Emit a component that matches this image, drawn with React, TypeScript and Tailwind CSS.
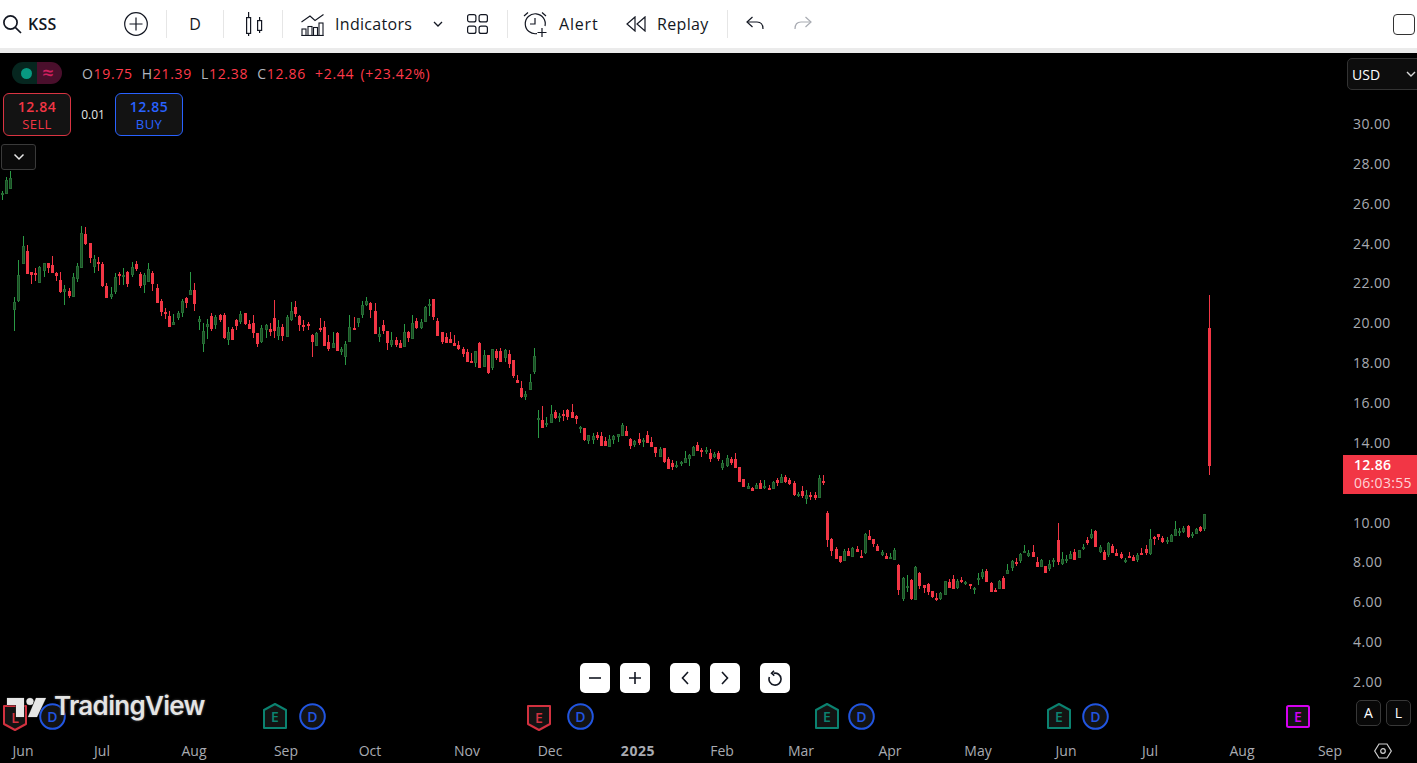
import React from "react";

type C = [number, "g" | "r", number, number, number, number];
const raw: { ox: number; oy: number; d: [number, string, number, number, number, number][] }[] = [
  { ox: 0, oy: 165, d: [
    [7,"g",78,83,88,105],[19,"g",37,45,87,87],[31,"g",18,40,72,72],[43,"g",396,411,435,497],[55,"g",285,330,408,410],[70,"g",213,243,297,297],[82,"r",240,258,327,327],[94,"r",321,321,330,357],[106,"r",309,324,327,348],[118,"g",304,306,354,354],[133,"g",294,294,318,336],[145,"r",294,294,309,324],[157,"r",273,300,324,324],[169,"r",321,324,333,348],[181,"r",321,345,381,384],[193,"g",360,372,381,420],[208,"r",369,378,393,399],[220,"g",324,336,396,396],[232,"g",294,303,342,351],[244,"g",183,204,309,309],[256,"r",186,207,237,240],[271,"r",234,234,279,294],[283,"g",270,282,306,324],[295,"r",276,291,297,318],[307,"r",291,297,363,366],[319,"r",354,363,399,399],[334,"g",366,387,396,402],[346,"g",324,336,381,387],[358,"r",321,327,333,360],[370,"g",309,330,336,360],[382,"r",318,321,357,366],[397,"g",291,306,330,336],[409,"r",288,297,312,318],[421,"r",321,327,363,369],[433,"g",324,330,360,384],[445,"g",294,312,351,351],[457,"r",318,324,357,378],[472,"r",357,369,414,414],[484,"r",402,408,441,453],[496,"r",429,441,444,462],[508,"r",438,453,486,486],[520,"g",447,471,480,480],[535,"g",438,444,459,465],[547,"g",402,408,444,456],[559,"r",396,399,414,429],[571,"g",321,375,390,390],[583,"r",354,375,417,438],[598,"g",453,462,471,495],[610,"g",474,498,537,561],[622,"g",462,477,486,522],[634,"r",444,453,492,498],[646,"g",450,456,480,492],[661,"r",447,450,465,471],[673,"r",444,450,519,522],[685,"g",486,501,525,540],[697,"r",486,492,525,525],[709,"r",462,465,483,495],[721,"g",438,447,471,477],[736,"r",444,444,477,480],[748,"r",465,477,492,492],[760,"r",450,474,504,519],[772,"r",504,504,537,546],[784,"g",480,489,531,534],[799,"g",477,480,495,519],[811,"r",474,492,501,513],[823,"r",405,459,498,519],[835,"g",465,486,513,525],
  ]},
  { ox: 280, oy: 280, d: [
    [7,"r",132,141,168,183],[22,"g",105,111,171,171],[34,"g",66,93,120,123],[46,"r",63,81,102,111],[58,"r",105,108,135,153],[70,"r",120,135,138,153],[85,"r",126,132,138,150],[97,"r",162,165,186,231],[109,"g",156,159,198,198],[121,"r",114,144,147,156],[133,"r",123,141,198,198],[145,"r",165,186,207,213],[160,"g",156,189,204,204],[172,"r",156,159,213,213],[184,"g",201,207,216,225],[196,"g",183,192,231,255],[208,"g",105,141,186,186],[223,"r",111,144,147,150],[235,"g",114,114,129,141],[247,"g",63,75,105,114],[259,"g",51,63,75,78],[271,"r",66,69,90,114],[286,"r",69,93,162,162],[298,"g",141,162,171,186],[310,"r",120,135,153,162],[322,"r",153,153,189,210],[334,"g",156,180,195,201],[349,"r",171,180,195,201],[361,"r",180,189,204,204],[373,"g",132,156,201,201],[385,"r",153,156,174,186],[397,"g",105,129,177,177],[409,"r",114,123,144,147],[424,"g",117,126,144,147],[436,"g",78,81,126,126],[448,"g",57,72,78,108],[460,"r",57,57,111,120],[472,"r",114,123,168,168],[487,"r",156,156,186,192],[499,"r",159,171,189,189],[511,"r",156,177,189,189],[523,"r",165,189,198,198],[535,"r",183,195,207,210],[550,"r",201,207,222,231],[562,"r",207,216,246,246],[574,"r",219,243,249,249],[586,"g",213,213,249,261],[598,"r",186,189,264,264],[613,"g",210,225,261,261],[625,"r",225,225,279,282],[637,"g",207,207,264,270],[649,"r",207,213,234,240],[661,"r",204,213,246,246],[676,"g",207,210,234,246],[688,"r",210,222,252,264],[700,"r",240,240,288,294],[712,"r",285,300,309,309],[724,"r",303,324,351,354],[736,"g",333,342,351,360],[751,"g",282,306,330,330],[763,"g",204,228,276,282],
  ]},
  { ox: 530, oy: 390, d: [
    [25,"g",60,84,90,144],[37,"r",48,90,114,114],[49,"g",81,99,105,111],[64,"g",45,72,99,99],[76,"r",60,66,84,87],[88,"g",69,78,81,96],[100,"r",60,72,75,93],[112,"r",57,60,81,90],[127,"r",42,66,84,84],[139,"r",75,78,87,102],[151,"g",108,111,114,129],[163,"r",114,114,150,153],[175,"g",135,135,153,162],[190,"g",129,138,150,162],[202,"r",126,135,144,150],[214,"r",126,138,168,168],[226,"r",141,153,168,168],[238,"g",135,147,171,171],[250,"g",135,138,150,162],[265,"g",132,132,141,156],[277,"g",99,105,138,138],[289,"r",108,123,138,138],[301,"r",144,147,168,177],[313,"g",150,153,165,171],[328,"r",129,147,159,165],[340,"g",144,150,156,171],[352,"r",123,135,159,159],[364,"r",141,156,171,171],[376,"r",171,171,189,201],[391,"g",171,177,201,201],[403,"r",174,174,216,219],[415,"r",201,207,237,237],[427,"r",210,219,231,240],[439,"g",213,225,228,234],[454,"g",213,216,222,228],[466,"g",183,204,219,219],[478,"g",192,195,207,228],[490,"g",168,171,198,198],[502,"r",156,165,183,183],[514,"r",174,180,183,201],[529,"g",171,180,183,192],[541,"r",177,189,207,216],[553,"g",186,192,201,204],[565,"r",183,189,207,213],[577,"g",210,219,234,240],[592,"g",195,204,228,231],[604,"r",201,207,219,225],[616,"r",189,207,234,234],[628,"r",231,231,276,276],[640,"r",267,267,291,291],[655,"g",279,288,297,297],[667,"r",291,294,303,303],[679,"g",279,285,297,297],[691,"r",270,279,297,297],[703,"g",270,288,294,297],[718,"r",285,294,297,300],[730,"g",273,276,297,297],[742,"r",264,270,279,288],[754,"g",252,261,279,279],[766,"r",255,261,276,279],[778,"r",264,270,282,285],[793,"r",273,279,315,318],[805,"g",306,312,315,321],[817,"r",288,303,318,324],[829,"g",300,315,327,342],[841,"r",306,315,318,330],[856,"r",306,315,324,330],[868,"g",255,264,324,324],[880,"r",255,273,276,285],
  ]},
  { ox: 810, oy: 500, d: [
    [52,"r",33,39,120,141],[64,"r",114,117,153,168],[79,"r",141,147,177,177],[91,"r",168,168,186,189],[103,"g",147,153,183,183],[115,"r",144,153,168,168],[127,"g",141,144,171,171],[142,"r",138,147,156,156],[154,"r",150,168,171,174],[166,"g",99,102,159,162],[178,"r",90,108,120,120],[190,"r",117,117,132,141],[202,"r",132,138,153,153],[217,"g",150,156,165,168],[229,"r",159,168,177,177],[241,"g",159,171,177,177],[253,"g",144,150,180,180],[265,"r",192,195,270,285],[280,"g",231,234,297,303],[292,"g",225,258,264,276],[304,"r",237,240,297,300],[316,"g",198,201,300,300],[328,"r",216,219,258,267],[343,"r",255,255,264,279],[355,"r",249,252,276,285],[367,"r",273,273,291,294],[379,"r",279,294,300,303],[391,"g",276,279,297,300],[406,"g",243,243,285,285],[418,"r",237,246,264,264],[430,"r",225,237,267,267],[442,"g",237,243,264,267],[454,"r",231,240,243,249],[466,"g",243,246,249,255],[481,"r",252,252,258,267],[493,"g",261,264,270,282],[505,"g",219,234,240,255],[517,"g",207,216,231,237],[529,"r",207,213,246,246],[544,"r",246,249,276,276],[556,"r",264,270,273,276],[568,"g",240,243,267,267],[580,"r",228,234,267,267],[592,"g",192,210,222,222],[607,"g",180,183,204,213],[619,"r",174,186,189,198],
  ]},
  { ox: 1010, oy: 500, d: [
    [31,"g",159,162,183,189],[43,"g",135,153,159,159],[55,"g",150,159,168,171],[70,"r",135,156,171,171],[82,"r",171,186,201,201],[94,"g",177,180,201,201],[106,"r",198,198,219,219],[118,"g",180,192,207,213],[130,"g",174,180,183,201],[145,"r",69,120,186,195],[157,"g",156,177,192,195],[169,"g",165,177,180,189],[181,"g",153,162,177,177],[193,"r",147,156,180,180],[208,"g",150,150,174,174],[220,"g",132,141,147,150],[232,"r",111,120,129,135],[244,"g",87,102,114,117],[256,"r",90,93,141,141],[271,"g",135,141,156,159],[283,"r",150,156,180,180],[295,"g",126,129,165,171],[307,"r",132,138,159,159],[319,"r",147,159,168,168],[334,"r",156,162,174,177],[346,"g",174,180,186,189],[358,"r",156,168,174,174],[370,"r",165,171,183,183],[382,"g",159,165,180,186],[394,"r",144,159,162,162],[409,"r",135,147,159,165],[421,"g",87,117,162,165],[433,"r",108,111,117,135],[445,"r",102,102,111,120],[457,"r",108,114,126,129],[472,"g",111,120,123,132],[484,"g",102,105,126,126],[496,"g",63,87,108,108],[508,"g",84,93,99,108],[520,"g",78,84,96,99],[535,"r",75,78,111,114],[547,"g",96,102,108,114],[559,"g",84,87,102,102],[571,"r",78,81,93,96],[583,"g",42,42,87,93],
  ]},
];

const candles: C[] = raw.flatMap(({ ox, oy, d }) =>
  d.map(([x, c, a, b, e, f]) => [ox + Math.floor(x / 3), c as "g" | "r", oy + a / 3, oy + b / 3, oy + e / 3, oy + f / 3] as C)
);
candles.push([1209, "r", 295, 328, 466, 475]);

function Chart() {
  return (
    <svg className="block w-full h-full" viewBox="0 53 1343 686" shapeRendering="crispEdges">
      {candles.map(([x, c, t, bt, bb, w], i) => {
        const h = Math.max(bb - bt, 2);
        if (c === "r")
          return (
            <g key={i} fill="#f23645">
              <rect x={x} y={t} width={1} height={w - t} />
              <rect x={x - 1} y={bt} width={3} height={h} />
            </g>
          );
        return (
          <g key={i}>
            <rect x={x} y={t} width={1} height={w - t} fill="#2a9a45" />
            <rect x={x - 1} y={bt} width={3} height={h} fill="#266b33" />
            <rect x={x} y={bt + 1} width={1} height={Math.max(h - 2, 0)} fill="#1a4d25" />
          </g>
        );
      })}
    </svg>
  );
}

const Sep = ({ cls }: { cls: string }) => <div className={`w-px h-[28px] bg-[#e6e6e6] shrink-0 ${cls}`} />;

function Marker({ kind, letter, cls }: { kind: "green" | "red" | "purple" | "blue"; letter: string; cls: string }) {
  const colors = { green: "#0b8270", red: "#d2313f", purple: "#d500f0", blue: "#2155e0" };
  const col = colors[kind];
  return (
    <svg className={`shrink-0 ${cls}`} width={kind === "blue" ? 27 : 24} height={kind === "blue" ? 27 : 26} viewBox={kind === "blue" ? "0 0 27 27" : "0 0 24 26"}>
      {kind === "blue" && <circle cx="13.5" cy="13.5" r="12.3" fill="#131313" stroke={col} strokeWidth="2" />}
      {kind === "green" && <path d="M12 1 L23 7 V25 H1 V7 Z" fill="#131313" stroke={col} strokeWidth="2" strokeLinejoin="round" />}
      {kind === "red" && <path d="M1 1 H23 V19 L12 25 L1 19 Z" fill="#131313" stroke={col} strokeWidth="2" strokeLinejoin="round" />}
      {kind === "purple" && <rect x="1" y="1" width="22" height="21" rx="1.5" fill="#131313" stroke={col} strokeWidth="2" />}
      <text
        x={kind === "blue" ? 13.5 : 12}
        y={kind === "blue" ? 18.5 : kind === "purple" ? 17 : kind === "red" ? 18 : 19}
        textAnchor="middle"
        fontSize="14"
        fontWeight="600"
        fontFamily="'Open Sans', sans-serif"
        fill={col}
      >
        {letter}
      </text>
    </svg>
  );
}

const months: [string, string][] = [
  ["Jun", "ml-[3px]"], ["Jul", "ml-[39px]"], ["Aug", "ml-[52px]"], ["Sep", "ml-[52px]"], ["Oct", "ml-[44px]"], ["Nov", "ml-[57px]"], ["Dec", "ml-[43px]"],
  ["2025", "ml-[48px] font-bold tracking-[0.6px]"], ["Feb", "ml-[44px]"], ["Mar", "ml-[39px]"], ["Apr", "ml-[49px]"], ["May", "ml-[48px]"], ["Jun", "ml-[48px]"], ["Jul", "ml-[44px]"], ["Aug", "ml-[52px]"], ["Sep", "ml-[48px]"],
];
const prices = ["30.00","28.00","26.00","24.00","22.00","20.00","18.00","16.00","14.00","","10.00","8.00","6.00","4.00","2.00"];

const Zbtn = ({ cls, children }: { cls: string; children: React.ReactNode }) => (
  <div className={`w-[30px] h-[30px] bg-white rounded-[5px] flex items-center justify-center shrink-0 ${cls}`}>{children}</div>
);

export default function App() {
  const ohlc: [string, string][] = [["O", "19.75"], ["H", "21.39"], ["L", "12.38"], ["C", "12.86"]];
  return (
    <div className="w-[1417px] h-[763px] overflow-hidden flex flex-col bg-black font-['Open_Sans',sans-serif]">
      {/* toolbar */}
      <div className="h-[53px] shrink-0 bg-white border-b-[5px] border-[#ebebeb] flex items-center text-[#131722] text-[16px]">
        <svg className="ml-[2px] shrink-0" width="20" height="20" viewBox="0 0 20 20" fill="none" stroke="#131722" strokeWidth="1.7"><circle cx="8.5" cy="8.5" r="6.6" /><path d="M13.3 13.3 L19 19" /></svg>
        <span className="ml-[6px] w-[30px] font-semibold whitespace-nowrap tracking-[0.3px]">KSS</span>
        <svg className="ml-[66px] shrink-0" width="24" height="24" viewBox="0 0 24 24" fill="none" stroke="#131722" strokeWidth="1.2"><circle cx="12" cy="12" r="11.3" /><path d="M12 5.5V18.5M5.5 12H18.5" /></svg>
        <Sep cls="ml-[18px]" />
        <span className="w-[56px] text-center font-medium">D</span>
        <Sep cls="" />
        <div className="w-[58px] flex justify-center shrink-0 pl-[2px]">
          <svg width="18" height="24" viewBox="0 0 18 24" fill="none" stroke="#131722" strokeWidth="1.2"><rect x="1.6" y="5.6" width="4" height="15.8" /><path d="M3.6 0V5.6M3.6 21.4V24" /><rect x="12.6" y="8.6" width="4" height="9.8" /><path d="M14.6 5V8.6M14.6 18.4V21" /></svg>
        </div>
        <Sep cls="" />
        <svg className="ml-[18px] shrink-0" width="23" height="23" viewBox="0 0 23 23" fill="none" stroke="#131722" strokeWidth="1.1"><path d="M0.5 9 L9 3 L14 7.5 L22.5 1.5" /><path d="M0.5 22.5 H22.5" /><rect x="1" y="16" width="4" height="6.5" /><rect x="7" y="13.5" width="4" height="9" /><rect x="12.5" y="14.5" width="4" height="8" /><rect x="18" y="10" width="4" height="12.5" /></svg>
        <span className="ml-[11px] w-[77px] whitespace-nowrap tracking-[0.3px]">Indicators</span>
        <svg className="ml-[20px] shrink-0" width="12" height="12" viewBox="0 0 12 12" fill="none" stroke="#131722" strokeWidth="1.3"><path d="M2 4 L6 8 L10 4" /></svg>
        <svg className="ml-[23px] shrink-0" width="21" height="20" viewBox="0 0 21 20" fill="none" stroke="#131722" strokeWidth="1.2"><rect x="0.6" y="0.6" width="8.3" height="7.3" rx="2" /><rect x="12.1" y="0.6" width="8.3" height="7.3" rx="2" /><rect x="0.6" y="12.1" width="8.3" height="7.3" rx="2" /><rect x="12.1" y="12.1" width="8.3" height="7.3" rx="2" /></svg>
        <Sep cls="ml-[19px]" />
        <svg className="ml-[15px] shrink-0" width="26" height="26" viewBox="0 0 26 26" fill="none" stroke="#131722" strokeWidth="1.2"><path d="M14 22.6 A10 10 0 1 1 22 15" /><path d="M12 7V13H7" /><path d="M1 5 L5 1.5M19 1.5 L23 5" /><path d="M19 17V26M14.5 21.5H23.5" /></svg>
        <span className="ml-[10px] w-[40px] whitespace-nowrap tracking-[0.8px]">Alert</span>
        <svg className="ml-[27px] shrink-0" width="20" height="16" viewBox="0 0 20 16" fill="none" stroke="#131722" strokeWidth="1.2"><path d="M9 1 L1 8 L9 15 Z" /><path d="M19 1 L11 8 L19 15 Z" /></svg>
        <span className="ml-[11px] w-[52px] whitespace-nowrap tracking-[0.35px]">Replay</span>
        <Sep cls="ml-[18px]" />
        <svg className="ml-[18px] shrink-0" width="18" height="16" viewBox="0 0 18 16" fill="none" stroke="#131722" strokeWidth="1.2"><path d="M6.5 1 L1 6 L6.5 11" /><path d="M1 6 H11 Q17 6 17 13" /></svg>
        <svg className="ml-[30px] shrink-0" width="18" height="16" viewBox="0 0 18 16" fill="none" stroke="#a8abb2" strokeWidth="1.2"><path d="M11.5 1 L17 6 L11.5 11" /><path d="M17 6 H7 Q1 6 1 13" /></svg>
        <div className="ml-auto mr-[2px] w-[22px] h-[21px] rounded-[4px] border border-[#333]" />
      </div>

      {/* main */}
      <div className="h-[686px] shrink-0 flex">
        <div className="relative w-[1343px] shrink-0">
          <Chart />

          {/* legend */}
          <div className="absolute left-[12px] top-[9px] flex items-center">
            <div className="w-[25px] h-[22px] rounded-l-[11px] bg-[#06261f] flex items-center justify-center pl-[3px]">
              <div className="w-[11px] h-[11px] rounded-full bg-[#089981]" />
            </div>
            <div className="w-[25px] h-[22px] rounded-r-[11px] bg-[#4a0f2c] flex items-center justify-center pr-[3px] text-[#d0205f] text-[20px] leading-none font-semibold">≈</div>
            <div className="ml-[20px] flex gap-[9px] text-[14px] tracking-[0.7px] [word-spacing:2px] whitespace-nowrap text-[#ff3a4a]">
              {ohlc.map(([k, v]) => (
                <span key={k}><span className="text-[#b2b5be]">{k}</span>{v}</span>
              ))}
              <span>+2.44 (+23.42%)</span>
            </div>
          </div>

          {/* trade */}
          <div className="absolute left-[3px] top-[40px] flex items-center">
            <div className="w-[68px] h-[43px] rounded-[6px] border border-[#d93442] bg-[#131313] pt-[2px] flex flex-col items-center justify-center text-[#f23645] leading-none">
              <span className="text-[14px] font-semibold h-[18px] tracking-[0.5px]">12.84</span>
              <span className="text-[13px] tracking-[0.4px]">SELL</span>
            </div>
            <span className="w-[44px] text-center text-[12px] text-[#e4e4e4]">0.01</span>
            <div className="w-[68px] h-[43px] rounded-[6px] border border-[#2962ff] bg-[#131313] pt-[2px] flex flex-col items-center justify-center text-[#2962ff] leading-none">
              <span className="text-[14px] font-semibold h-[18px] tracking-[0.5px]">12.85</span>
              <span className="text-[13px] tracking-[0.4px]">BUY</span>
            </div>
          </div>
          <div className="absolute left-[1px] top-[91px] w-[35px] h-[26px] rounded-[3px] border border-[#3a3a3a] bg-[#0a0a0a] flex items-center justify-center">
            <svg width="12" height="8" viewBox="0 0 12 8" fill="none" stroke="#e8e8e8" strokeWidth="1.5"><path d="M1.5 1.5 L6 6 L10.5 1.5" /></svg>
          </div>

          {/* zoom controls */}
          <div className="absolute left-[580px] top-[610px] flex">
            <Zbtn cls=""><svg width="14" height="14" viewBox="0 0 14 14" stroke="#131722" strokeWidth="1.6"><path d="M1 7H13" /></svg></Zbtn>
            <Zbtn cls="ml-[10px]"><svg width="14" height="14" viewBox="0 0 14 14" stroke="#131722" strokeWidth="1.6"><path d="M1 7H13M7 1V13" /></svg></Zbtn>
            <Zbtn cls="ml-[20px]"><svg width="8" height="14" viewBox="0 0 8 14" fill="none" stroke="#131722" strokeWidth="1.6"><path d="M7 1 L1.5 7 L7 13" /></svg></Zbtn>
            <Zbtn cls="ml-[10px]"><svg width="8" height="14" viewBox="0 0 8 14" fill="none" stroke="#131722" strokeWidth="1.6"><path d="M1 1 L6.5 7 L1 13" /></svg></Zbtn>
            <Zbtn cls="ml-[20px]"><svg width="16" height="16" viewBox="0 0 16 16" fill="none" stroke="#131722" strokeWidth="1.6"><path d="M6.5 3.3 A6 6 0 1 1 2.4 7" /><path d="M7 0.8 L4.6 3.3 L7.3 5.6" /></svg></Zbtn>
          </div>

          {/* event markers */}
          <div className="absolute left-0 top-[650px] flex items-start">
            <Marker kind="red" letter="L" cls="ml-[3px] mt-[2px]" />
            <Marker kind="blue" letter="D" cls="ml-[12px]" />
            <Marker kind="green" letter="E" cls="ml-[197px]" />
            <Marker kind="blue" letter="D" cls="ml-[12px]" />
            <Marker kind="red" letter="E" cls="ml-[201px] mt-[2px]" />
            <Marker kind="blue" letter="D" cls="ml-[16px]" />
            <Marker kind="green" letter="E" cls="ml-[221px]" />
            <Marker kind="blue" letter="D" cls="ml-[9px]" />
            <Marker kind="green" letter="E" cls="ml-[172px]" />
            <Marker kind="blue" letter="D" cls="ml-[11px]" />
            <Marker kind="purple" letter="E" cls="ml-[177px] mt-[2px]" />
          </div>

          {/* watermark */}
          <div className="absolute left-[7px] top-[643px] flex items-center">
            <svg width="40" height="21" viewBox="0 0 40 21" fill="#e6e6e6" stroke="#2a2a2a" strokeWidth="1" paintOrder="stroke" className="shrink-0 overflow-visible">
              <path d="M0 1 H17 V20 H9 V8 H0 Z" />
              <circle cx="23" cy="4.5" r="3.6" />
              <path d="M29 1 H39 L30 20 H21 Z" />
            </svg>
            <span className="ml-[7px] mt-[-3px] text-[26px] font-semibold tracking-[-0.7px] leading-none text-[#e4e4e4] font-['Inter',sans-serif] [text-shadow:0_0_2px_#3a3a3a,0_0_3px_#3a3a3a]">TradingView</span>
          </div>
        </div>

        {/* price axis */}
        <div className="relative w-[74px] shrink-0 flex flex-col text-[14px] text-[#a8abb2]">
          <div className="mt-[5px] ml-[4px] w-[76px] h-[32px] shrink-0 rounded-[5px] border border-[#333] bg-[#0d0d0d] flex items-center pl-[4px] text-white font-medium">
            USD
            <svg className="ml-[26px] shrink-0" width="10" height="6" viewBox="0 0 10 6" fill="none" stroke="#d8d8d8" strokeWidth="1.4"><path d="M1 1 L5 5 L9 1" /></svg>
          </div>
          <div className="mt-[13.5px] flex flex-col">
            {prices.map((p, i) => (
              <div key={i} className="h-[39.86px] pl-[10px] flex items-center tracking-[0.4px]">{p}</div>
            ))}
          </div>
          <div className="ml-[13px] flex gap-[5px] mt-[-1.5px]">
            <div className="w-[25px] h-[26px] rounded-[5px] border border-[#383838] bg-[#080808] text-white flex items-center justify-center text-[14px]">A</div>
            <div className="w-[25px] h-[26px] rounded-[5px] border border-[#383838] bg-[#080808] text-white flex items-center justify-center text-[14px]">L</div>
          </div>
          <div className="absolute left-0 top-[402px] w-[74px] h-[39px] bg-[#f23645] pl-[11px] pb-[2px] flex flex-col justify-center leading-[18px] tracking-[0.3px]">
            <span className="font-semibold text-white">12.86</span>
            <span className="text-[#ffd3d7]">06:03:55</span>
          </div>
        </div>
      </div>

      {/* time axis */}
      <div className="flex-1 flex items-center pb-[1px] text-[14px] text-[#a8abb2]">
        {months.map(([m, c], i) => (
          <span key={i} className={`w-[40px] shrink-0 text-center whitespace-nowrap ${c}`}>{m}</span>
        ))}
        <svg className="ml-[24px] shrink-0" width="18" height="16" viewBox="0 0 18 16" fill="none" stroke="#d0d0d0" strokeWidth="1.2"><path d="M5 1 H13 L17.3 8 L13 15 H5 L0.7 8 Z" /><circle cx="9" cy="8" r="2.3" /></svg>
      </div>
    </div>
  );
}
